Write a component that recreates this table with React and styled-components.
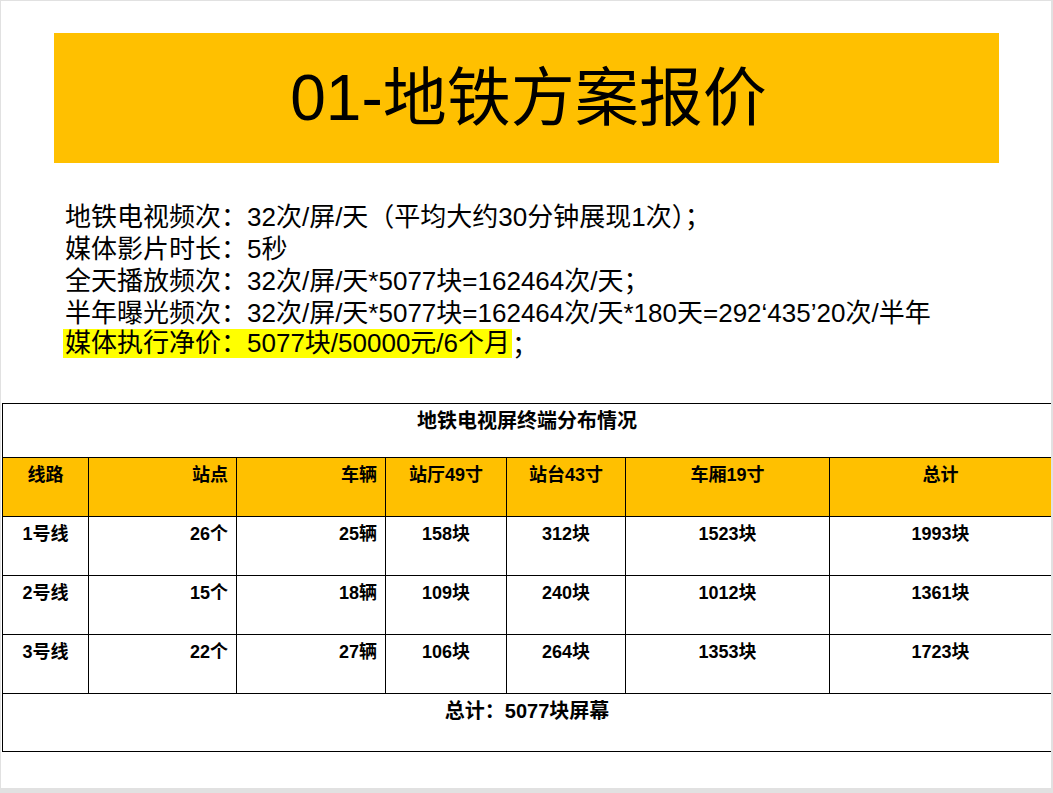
import React from 'react';
import styled, { createGlobalStyle } from 'styled-components';

const GlobalStyle = createGlobalStyle`
  html, body {
    margin: 0;
    padding: 0;
    background: #e1e1e1;
  }
  body {
    font-family: "Liberation Sans", "Noto Sans CJK SC", sans-serif;
    color: #000;
  }
`;

const Slide = styled.div`
  width: 1050px;
  height: 787px;
  margin: 1px 0 0 1px;
  background: #fff;
  overflow: hidden;
  display: flex;
  flex-direction: column;
`;

const TitleBand = styled.div`
  margin: 32px 0 0 53px;
  width: 945px;
  height: 130px;
  background: #ffc000;
  display: flex;
  align-items: center;
  justify-content: center;
  font-size: 64px;
  line-height: 1;
  padding-left: 4px;
  box-sizing: border-box;
`;

const Notes = styled.div`
  margin: 38px 0 0 64px;
  font-size: 26px;
  line-height: 32px;
`;

const Line = styled.div`
  height: 32px;
  white-space: nowrap;
`;

const Mark = styled.span`
  display: inline-block;
  height: 29px;
  line-height: 29px;
  vertical-align: top;
  background: #ffff00;
  margin-left: -2px;
  padding: 0 2px;
`;

const Table = styled.table`
  margin: 42px 0 0 1px;
  width: 1049px;
  border-collapse: collapse;
  table-layout: fixed;
`;

const Row = styled.tr`
  height: ${(p) => p.h}px;
  background: ${(p) => (p.head ? '#ffc000' : '#fff')};
`;

const Cell = styled.td`
  border: 1px solid #000;
  vertical-align: top;
  padding: 7px 8px 0;
  font-size: ${(p) => (p.big ? 20 : 18)}px;
  line-height: 20px;
  font-weight: bold;
  text-align: ${(p) => p.align || 'center'};
  white-space: nowrap;
  overflow: hidden;
`;

const widths = [86, 148, 149, 121, 119, 204, 222];
const aligns = ['center', 'right', 'right', 'center', 'center', 'center', 'center'];

const header = ['线路', '站点', '车辆', '站厅49寸', '站台43寸', '车厢19寸', '总计'];
const rows = [
  ['1号线', '26个', '25辆', '158块', '312块', '1523块', '1993块'],
  ['2号线', '15个', '18辆', '109块', '240块', '1012块', '1361块'],
  ['3号线', '22个', '27辆', '106块', '264块', '1353块', '1723块'],
];

export default function App() {
  return (
    <>
      <GlobalStyle />
      <Slide>
        <TitleBand>01-地铁方案报价</TitleBand>
        <Notes>
          <Line>地铁电视频次：32次/屏/天（平均大约30分钟展现1次）；</Line>
          <Line>媒体影片时长：5秒</Line>
          <Line>全天播放频次：32次/屏/天*5077块=162464次/天；</Line>
          <Line>半年曝光频次：32次/屏/天*5077块=162464次/天*180天=292‘435’20次/半年</Line>
          <Line>
            <Mark>媒体执行净价：5077块/50000元/6个月</Mark>；
          </Line>
        </Notes>
        <Table>
          <colgroup>
            {widths.map((w, i) => (
              <col key={i} style={{ width: w }} />
            ))}
          </colgroup>
          <tbody>
            <Row h={54}>
              <Cell big colSpan={7}>地铁电视屏终端分布情况</Cell>
            </Row>
            <Row h={59} head>
              {header.map((t, i) => (
                <Cell key={t} align={aligns[i]}>{t}</Cell>
              ))}
            </Row>
            {rows.map((r) => (
              <Row h={59} key={r[0]}>
                {r.map((t, i) => (
                  <Cell key={i} align={aligns[i]}>{t}</Cell>
                ))}
              </Row>
            ))}
            <Row h={58}>
              <Cell big colSpan={7}>总计：5077块屏幕</Cell>
            </Row>
          </tbody>
        </Table>
      </Slide>
    </>
  );
}
